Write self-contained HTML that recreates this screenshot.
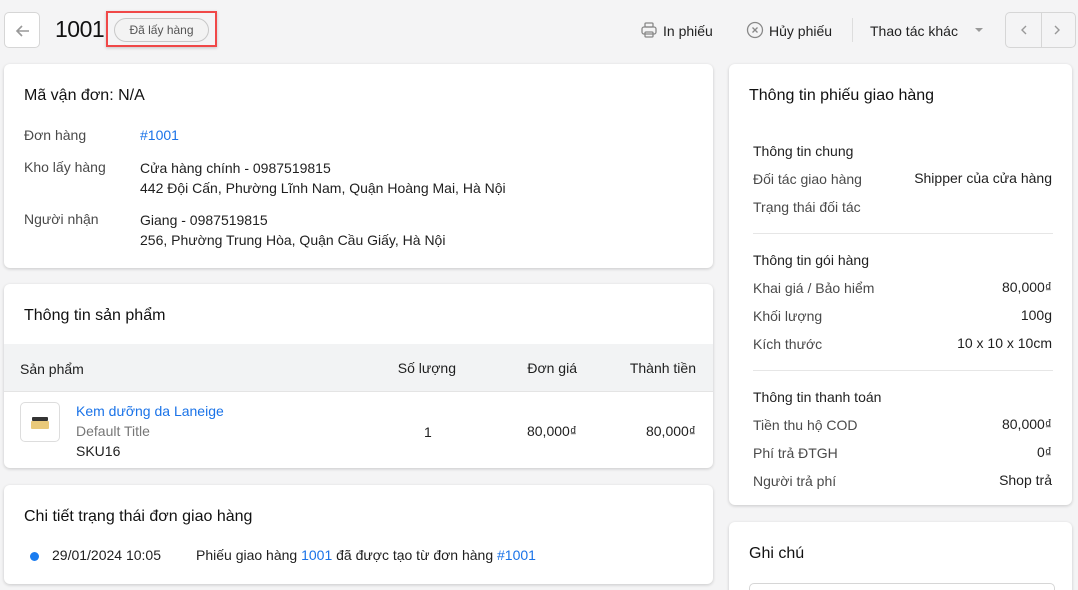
<!DOCTYPE html><html><head><meta charset="utf-8"><style>
*{box-sizing:border-box;margin:0;padding:0}
html,body{width:1078px;height:590px;overflow:hidden}
body{background:#f4f4f5;font-family:"Liberation Sans",sans-serif;font-size:14px;color:#1f1f1f;position:relative}
.a{position:absolute}
.card{position:absolute;background:#fff;border-radius:6px;box-shadow:0 1px 3px rgba(0,0,0,.18)}
.t{font-size:16px;color:#111}
.l{color:#4a4a4a}
.b{color:#1a73e8}
.r{position:absolute;right:20px;text-align:right}
.card .a{margin-top:1px}
</style></head><body>
<div class="a" style="left:4px;top:12px;width:36px;height:36px;border:1px solid #d6d6d6;border-radius:5px;background:#fff"><svg width="36" height="36" viewBox="0 0 36 36"><path d="M24 18H12M17 13l-5 5 5 5" stroke="#999" stroke-width="1.6" fill="none"/></svg></div>
<div class="a" style="left:55px;top:16px;font-size:23px;color:#111;letter-spacing:-0.5px">1001</div>
<div class="a" style="left:106px;top:11px;width:111px;height:36px;border:2px solid #f04848;box-shadow:0 1px 3px rgba(0,0,0,.2)"></div>
<div class="a" style="left:114px;top:18px;width:95px;height:24px;border:1px solid #c8c8c8;border-radius:12px;background:#f3f3f3;font-size:12px;color:#555;text-align:center;line-height:22px">Đã lấy hàng</div>
<svg class="a" style="left:640px;top:21px" width="18" height="18" viewBox="0 0 18 18" fill="none" stroke="#888" stroke-width="1.3"><rect x="5" y="2" width="8" height="4" rx="1"/><rect x="2" y="6" width="14" height="7" rx="2"/><rect x="5" y="11" width="8" height="5" rx="1"/></svg>
<div class="a" style="left:663px;top:23px;color:#222">In phiếu</div>
<svg class="a" style="left:746px;top:21px" width="18" height="18" viewBox="0 0 18 18" fill="none" stroke="#888" stroke-width="1.3"><circle cx="9" cy="9" r="7.5"/><path d="M6.5 6.5l5 5M11.5 6.5l-5 5"/></svg>
<div class="a" style="left:769px;top:23px;color:#222">Hủy phiếu</div>
<div class="a" style="left:852px;top:18px;width:1px;height:24px;background:#ddd"></div>
<div class="a" style="left:870px;top:23px;color:#222">Thao tác khác</div>
<div class="a" style="left:975px;top:28px;border:4px solid transparent;border-top-color:#999"></div>
<div class="a" style="left:1005px;top:12px;width:71px;height:36px;border:1px solid #d6d6d6;border-radius:5px;background:#f4f4f5"><div class="a" style="left:35px;top:0;width:1px;height:34px;background:#d6d6d6"></div><svg class="a" style="left:0;top:0" width="70" height="34"><path d="M20 13l-4 4 4 4M49 13l4 4-4 4" stroke="#999" stroke-width="1.4" fill="none"/></svg></div>

<div class="card" style="left:4px;top:64px;width:709px;height:204px">
<div class="a t" style="left:20px;top:22px">Mã vận đơn: N/A</div>
<div class="a l" style="left:20px;top:62px">Đơn hàng</div><div class="a b" style="left:136px;top:62px">#1001</div>
<div class="a l" style="left:20px;top:94px">Kho lấy hàng</div><div class="a" style="left:136px;top:93px;line-height:20px">Cửa hàng chính - 0987519815<br>442 Đội Cấn, Phường Lĩnh Nam, Quận Hoàng Mai, Hà Nội</div>
<div class="a l" style="left:20px;top:146px">Người nhận</div><div class="a" style="left:136px;top:145px;line-height:20px">Giang - 0987519815<br>256, Phường Trung Hòa, Quận Cầu Giấy, Hà Nội</div>
</div>

<div class="card" style="left:4px;top:284px;width:709px;height:184px">
<div class="a t" style="left:20px;top:22px">Thông tin sản phẩm</div>
<div class="a" style="left:0;top:60px;width:709px;height:48px;background:#f2f3f4;border-bottom:1px solid #e4e4e4;margin-top:0"></div>
<div class="a" style="left:16px;top:76px">Sản phẩm</div><div class="r" style="right:257px;top:76px">Số lượng</div><div class="r" style="right:136px;top:76px">Đơn giá</div><div class="r" style="right:17px;top:76px">Thành tiền</div>
<div class="a" style="left:16px;top:117px;width:40px;height:40px;border:1px solid #ddd;border-radius:5px"><div class="a" style="left:11px;top:13px;width:16px;height:4px;background:#333;border-radius:1px"></div><div class="a" style="left:10px;top:17px;width:18px;height:8px;background:#e9c97a;border-radius:1px"></div></div>
<div class="a b" style="left:72px;top:118px">Kem dưỡng da Laneige</div>
<div class="a" style="left:72px;top:138px;color:#777">Default Title</div>
<div class="a" style="left:72px;top:158px">SKU16</div>
<div class="a" style="left:420px;top:139px">1</div><div class="r" style="right:136px;top:139px">80,000₫</div><div class="r" style="right:17px;top:139px">80,000₫</div>
</div>

<div class="card" style="left:4px;top:485px;width:709px;height:99px">
<div class="a t" style="left:20px;top:22px">Chi tiết trạng thái đơn giao hàng</div>
<div class="a" style="left:26px;top:66px;width:9px;height:9px;border-radius:50%;background:#1a7cf0"></div>
<div class="a" style="left:48px;top:61px">29/01/2024 10:05</div>
<div class="a" style="left:192px;top:61px">Phiếu giao hàng <span class="b">1001</span> đã được tạo từ đơn hàng <span class="b">#1001</span></div>
</div>

<div class="card" style="left:729px;top:64px;width:343px;height:441px">
<div class="a t" style="left:20px;top:22px">Thông tin phiếu giao hàng</div>
<div class="a" style="left:24px;top:78px">Thông tin chung</div>
<div class="a l" style="left:24px;top:106px">Đối tác giao hàng</div><div class="r" style="top:106px">Shipper của cửa hàng</div>
<div class="a l" style="left:24px;top:134px">Trạng thái đối tác</div>
<div class="a" style="left:24px;top:168px;width:300px;height:1px;background:#e6e6e6"></div>
<div class="a" style="left:24px;top:187px">Thông tin gói hàng</div>
<div class="a l" style="left:24px;top:215px">Khai giá / Bảo hiểm</div><div class="r" style="top:215px">80,000₫</div>
<div class="a l" style="left:24px;top:243px">Khối lượng</div><div class="r" style="top:243px">100g</div>
<div class="a l" style="left:24px;top:271px">Kích thước</div><div class="r" style="top:271px">10 x 10 x 10cm</div>
<div class="a" style="left:24px;top:305px;width:300px;height:1px;background:#e6e6e6"></div>
<div class="a" style="left:24px;top:324px">Thông tin thanh toán</div>
<div class="a l" style="left:24px;top:352px">Tiền thu hộ COD</div><div class="r" style="top:352px">80,000₫</div>
<div class="a l" style="left:24px;top:380px">Phí trả ĐTGH</div><div class="r" style="top:380px">0₫</div>
<div class="a l" style="left:24px;top:408px">Người trả phí</div><div class="r" style="top:408px">Shop trả</div>
</div>

<div class="card" style="left:729px;top:522px;width:343px;height:80px">
<div class="a t" style="left:20px;top:22px">Ghi chú</div>
<div class="a" style="left:20px;top:60px;width:306px;height:30px;border:1px solid #d6d6d6;border-radius:5px"></div>
</div>
</body></html>
